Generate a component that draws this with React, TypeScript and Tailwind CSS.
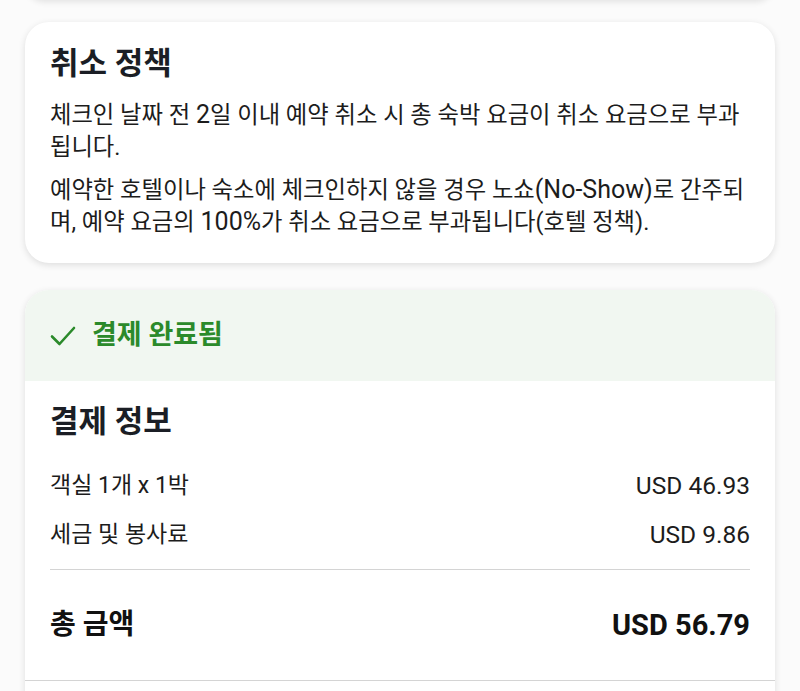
const fontStack = "font-['Roboto','Noto_Sans_CJK_KR',sans-serif]";

function CheckIcon() {
  return (
    <svg width="26" height="22" viewBox="0 0 26 22" fill="none" className="shrink-0">
      <path d="M2 11.5 L9.5 19 L24 3" stroke="#2b8a2b" strokeWidth="2.6" strokeLinecap="round" strokeLinejoin="round" />
    </svg>
  );
}

function PriceRow({ label, amount }: { label: string; amount: string }) {
  return (
    <div className="flex items-center justify-between leading-[32px] text-[#1c1c1c]">
      <span className="text-[23px]">{label}</span>
      <span className="text-[24.5px]">{amount}</span>
    </div>
  );
}

export default function App() {
  return (
    <div className={`${fontStack} min-h-[691px] overflow-hidden bg-[#fbfbfb] px-[25px]`}>
      {/* tail of previous card */}
      <div className="-mt-[40px] h-[40px] rounded-[24px] bg-white shadow-[0_2px_6px_rgba(0,0,0,0.10)]" />

      <section className="mt-[22px] rounded-[24px] bg-white px-[25px] pb-[25px] pt-[22px] shadow-[0_2px_7px_rgba(0,0,0,0.12)]">
        <h2 className="text-[31px] font-bold leading-[40px] text-[#1b1e25]">취소 정책</h2>
        <p className="mt-[15px] text-[23.3px] leading-[32px] text-[#1c1c1c]">
          체크인 날짜 전 <span className="text-[25px]">2</span>일 이내 예약 취소 시 총 숙박 요금이 취소 요금으로 부과됩니다.
        </p>
        <p className="mt-[11px] text-[23.3px] leading-[32px] text-[#1c1c1c]">
          예약한 호텔이나 숙소에 체크인하지 않을 경우 노쇼<span className="text-[25px]">(No-Show)</span>로 간주되며, 예약 요금의{" "}
          <span className="text-[25px]">100%</span>가 취소 요금으로 부과됩니다(호텔 정책).
        </p>
      </section>

      <section className="mt-[27px] overflow-hidden rounded-t-[24px] bg-white shadow-[0_2px_7px_rgba(0,0,0,0.12)]">
        <div className="flex h-[91px] items-center gap-[16px] bg-[#f1f7f1] px-[25px]">
          <CheckIcon />
          <span className="text-[27px] font-bold text-[#2b8a2b]">결제 완료됨</span>
        </div>
        <div className="px-[25px] pt-[21px]">
          <h2 className="text-[31px] font-bold leading-[40px] text-[#1b1e25]">결제 정보</h2>
          <div className="mt-[28px] flex flex-col gap-[17px]">
            <PriceRow label="객실 1개 x 1박" amount="USD 46.93" />
            <PriceRow label="세금 및 봉사료" amount="USD 9.86" />
          </div>
          <div className="mt-[18px] h-px bg-[#d4d4d4]" />
          <div className="flex items-center justify-between py-[37px] font-bold leading-[36px] text-[#111111]">
            <span className="text-[28px]">총 금액</span>
            <span className="text-[29px]">USD 56.79</span>
          </div>
        </div>
        <div className="h-px bg-[#d4d4d4]" />
        <div className="h-[40px]" />
      </section>
    </div>
  );
}
